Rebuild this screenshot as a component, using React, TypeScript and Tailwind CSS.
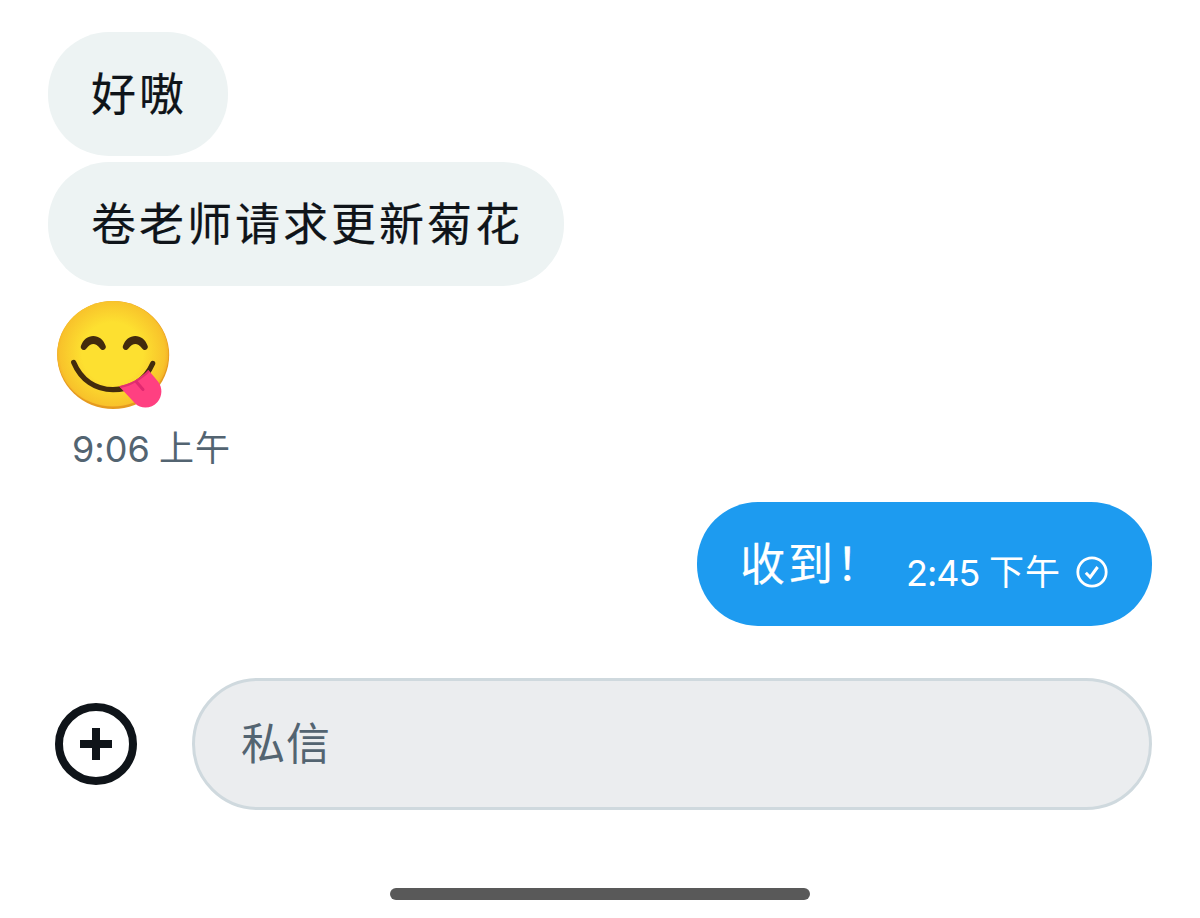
import { useState } from 'react'
import type { ReactNode } from 'react'

function ReceivedBubble({ children }: { children: ReactNode }) {
  return (
    <div className="flex h-[124px] w-fit items-center whitespace-nowrap rounded-[61px] bg-[#edf3f3] pl-[43px] pr-[41px] text-[45px] tracking-[3px] text-[#0f1419]">
      <span className="mt-[2px] leading-[68px] [-webkit-text-stroke:0.2px_currentColor]">{children}</span>
    </div>
  )
}

function YumEmoji() {
  return (
    <svg width="128" height="118" viewBox="0 0 128 118" fill="none" className="block">
      <defs>
        <radialGradient id="face" cx="64.5" cy="57" r="61" gradientUnits="userSpaceOnUse">
          <stop offset="0.5" stopColor="#fde030" />
          <stop offset="0.86" stopColor="#f8c32b" />
          <stop offset="1" stopColor="#f09a23" />
        </radialGradient>
      </defs>
      <ellipse cx="65.2" cy="59" rx="56" ry="54" fill="#e59a1f" />
      <ellipse cx="64.8" cy="57.8" rx="55.6" ry="52.8" fill="url(#face)" />
      <g fill="#422b0d">
        <path id="eye" d="M32.8 50.3C35 43.5 40 40 45.3 40s10.3 3.5 12.5 10.3c.7 3.2-3.4 5-5.4 2.4-2.8-3.2-4.9-4.6-7.1-4.6s-4.3 1.4-7.1 4.6c-2 2.6-6.1.8-5.4-2.4z" />
        <use href="#eye" x="42" />
      </g>
      <path d="M25.7 66.5C33 84 47.5 93.7 65 93.7S97.5 84 104.7 67.5" stroke="#422b0d" strokeWidth="5.2" strokeLinecap="round" />
      <path d="M71 90.3C82 88 92 83 100.3 74L110 85.5c4.8 6.3 4.5 14.5-.5 20.5-6 7-16.5 7.5-22.5 1.3z" fill="#ff4081" />
      <path d="M71 90.3C82 88 92 83 100.3 74l1.4 1.8c-8 8-18 14-29 16.3z" fill="#e0306f" />
      <path d="M88.5 86l6.500 7.500" stroke="#e02870" strokeWidth="3" strokeLinecap="round" />
    </svg>
  )
}

function SentIcon() {
  return (
    <svg width="32" height="32" viewBox="0 0 32 32" fill="none" stroke="currentColor">
      <circle cx="16" cy="16" r="14.2" strokeWidth="2.8" />
      <path d="M9.8 16.8l4.400 4.400 7.400-10.200" strokeWidth="3" />
    </svg>
  )
}

function PlusIcon() {
  return (
    <svg width="82" height="82" viewBox="0 0 82 82" fill="none" stroke="currentColor" strokeWidth="8">
      <circle cx="41" cy="41" r="37" />
      <path d="M41 25v32M25 41h32" />
    </svg>
  )
}

export default function App() {
  const [message, setMessage] = useState('')

  return (
    <div className="flex h-[918px] w-[1200px] flex-col overflow-hidden bg-white px-12 pt-8 font-[Inter,'Noto_Sans_CJK_SC',sans-serif] [font-feature-settings:'calt'_0]">
      <div className="flex flex-col gap-1.5">
        <ReceivedBubble>好嗷</ReceivedBubble>
        <ReceivedBubble>卷老师请求更新菊花</ReceivedBubble>
      </div>

      <div className="mt-2.5">
        <YumEmoji />
      </div>
      <div className="ml-6 mt-[8px] flex h-[52px] items-center whitespace-nowrap text-[35px] text-[#536471]">
        <span className="mt-[2px] w-[87px] text-[36px]">9:06</span>
        <span className="tracking-[1px]">上午</span>
      </div>

      <div className="mt-[28px] flex h-[124px] w-[455px] items-center self-end whitespace-nowrap rounded-[61px] bg-[#1d9bf0] pl-[43px] text-white">
        <span className="mt-[2px] w-[166px] text-[45px] leading-[68px] tracking-[3px] [-webkit-text-stroke:0.2px_currentColor]">收到！</span>
        <div className="mt-[15px] flex items-center text-[35px] leading-[52px]">
          <span className="mt-[2px] w-[83px] text-[36px] tracking-[-1px]">2:45</span>
          <span className="tracking-[1px]">下午</span>
          <span className="ml-[15px]">
            <SentIcon />
          </span>
        </div>
      </div>

      <div className="mt-[52px] flex h-[132px] shrink-0 items-center">
        <button aria-label="添加" className="ml-[7px] mr-[55px] text-[#0f1419]">
          <PlusIcon />
        </button>
        <input
          value={message}
          onChange={(e) => setMessage(e.target.value)}
          placeholder="私信"
          className="h-[132px] w-[960px] rounded-full border-[3px] border-[#cfd9de] bg-[#ebedef] px-[46px] text-[44px] tracking-[1px] text-[#0f1419] outline-none placeholder:text-[#536471]"
        />
      </div>

      <div className="mt-[78px] h-3 w-[420px] shrink-0 self-center rounded-full bg-[#595959]" />
    </div>
  )
}
